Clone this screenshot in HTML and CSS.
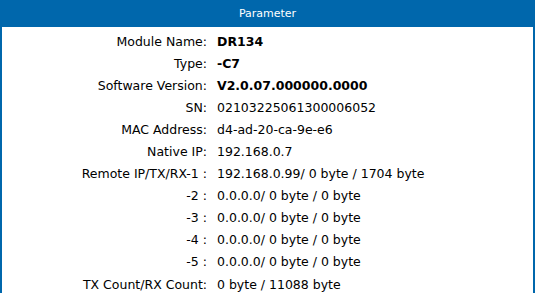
FILE: index.html
```html
<!DOCTYPE html>
<html lang="en">
<head>
    <meta charset="UTF-8">
    <title>Parameter</title>
    <link rel="stylesheet" href="styles.css">
</head>
<body>
    <div class="panel">
        <div class="panel-title">Parameter</div>
        <div class="param-list">
            <div class="label">Module Name:</div><div class="value strong">DR134</div>
            <div class="label">Type:</div><div class="value strong">-C7</div>
            <div class="label">Software Version:</div><div class="value strong">V2.0.07.000000.0000</div>
            <div class="label">SN:</div><div class="value">02103225061300006052</div>
            <div class="label">MAC Address:</div><div class="value">d4-ad-20-ca-9e-e6</div>
            <div class="label">Native IP:</div><div class="value">192.168.0.7</div>
            <div class="label">Remote IP/TX/RX-1 :</div><div class="value">192.168.0.99/ 0 byte / 1704 byte</div>
            <div class="label">-2 :</div><div class="value">0.0.0.0/ 0 byte / 0 byte</div>
            <div class="label">-3 :</div><div class="value">0.0.0.0/ 0 byte / 0 byte</div>
            <div class="label">-4 :</div><div class="value">0.0.0.0/ 0 byte / 0 byte</div>
            <div class="label">-5 :</div><div class="value">0.0.0.0/ 0 byte / 0 byte</div>
            <div class="label">TX Count/RX Count:</div><div class="value">0 byte / 11088 byte</div>
        </div>
    </div>
</body>
</html>
```
FILE: styles.css
```css
body {
    margin: 0;
    font-family: "DejaVu Sans", Verdana, sans-serif;
    font-size: 12.5px;
    color: #000;
    background: #fff;
}
.panel {
    border: 2px solid #0067ac;
    border-top: none;
    border-bottom: none;
    min-height: 293px;
    box-sizing: border-box;
}
.panel-title {
    background-color: #0067ac;
    color: #fff;
    height: 27px;
    line-height: 28px;
    text-align: center;
    font-size: 11px;
    margin: 0 -2px;
}
.param-list {
    display: grid;
    grid-template-columns: 205px 1fr;
    column-gap: 10px;
    grid-auto-rows: 22.1px;
    align-items: center;
    padding-top: 3px;
}
.label {
    text-align: right;
}
.strong {
    font-weight: bold;
}
```
